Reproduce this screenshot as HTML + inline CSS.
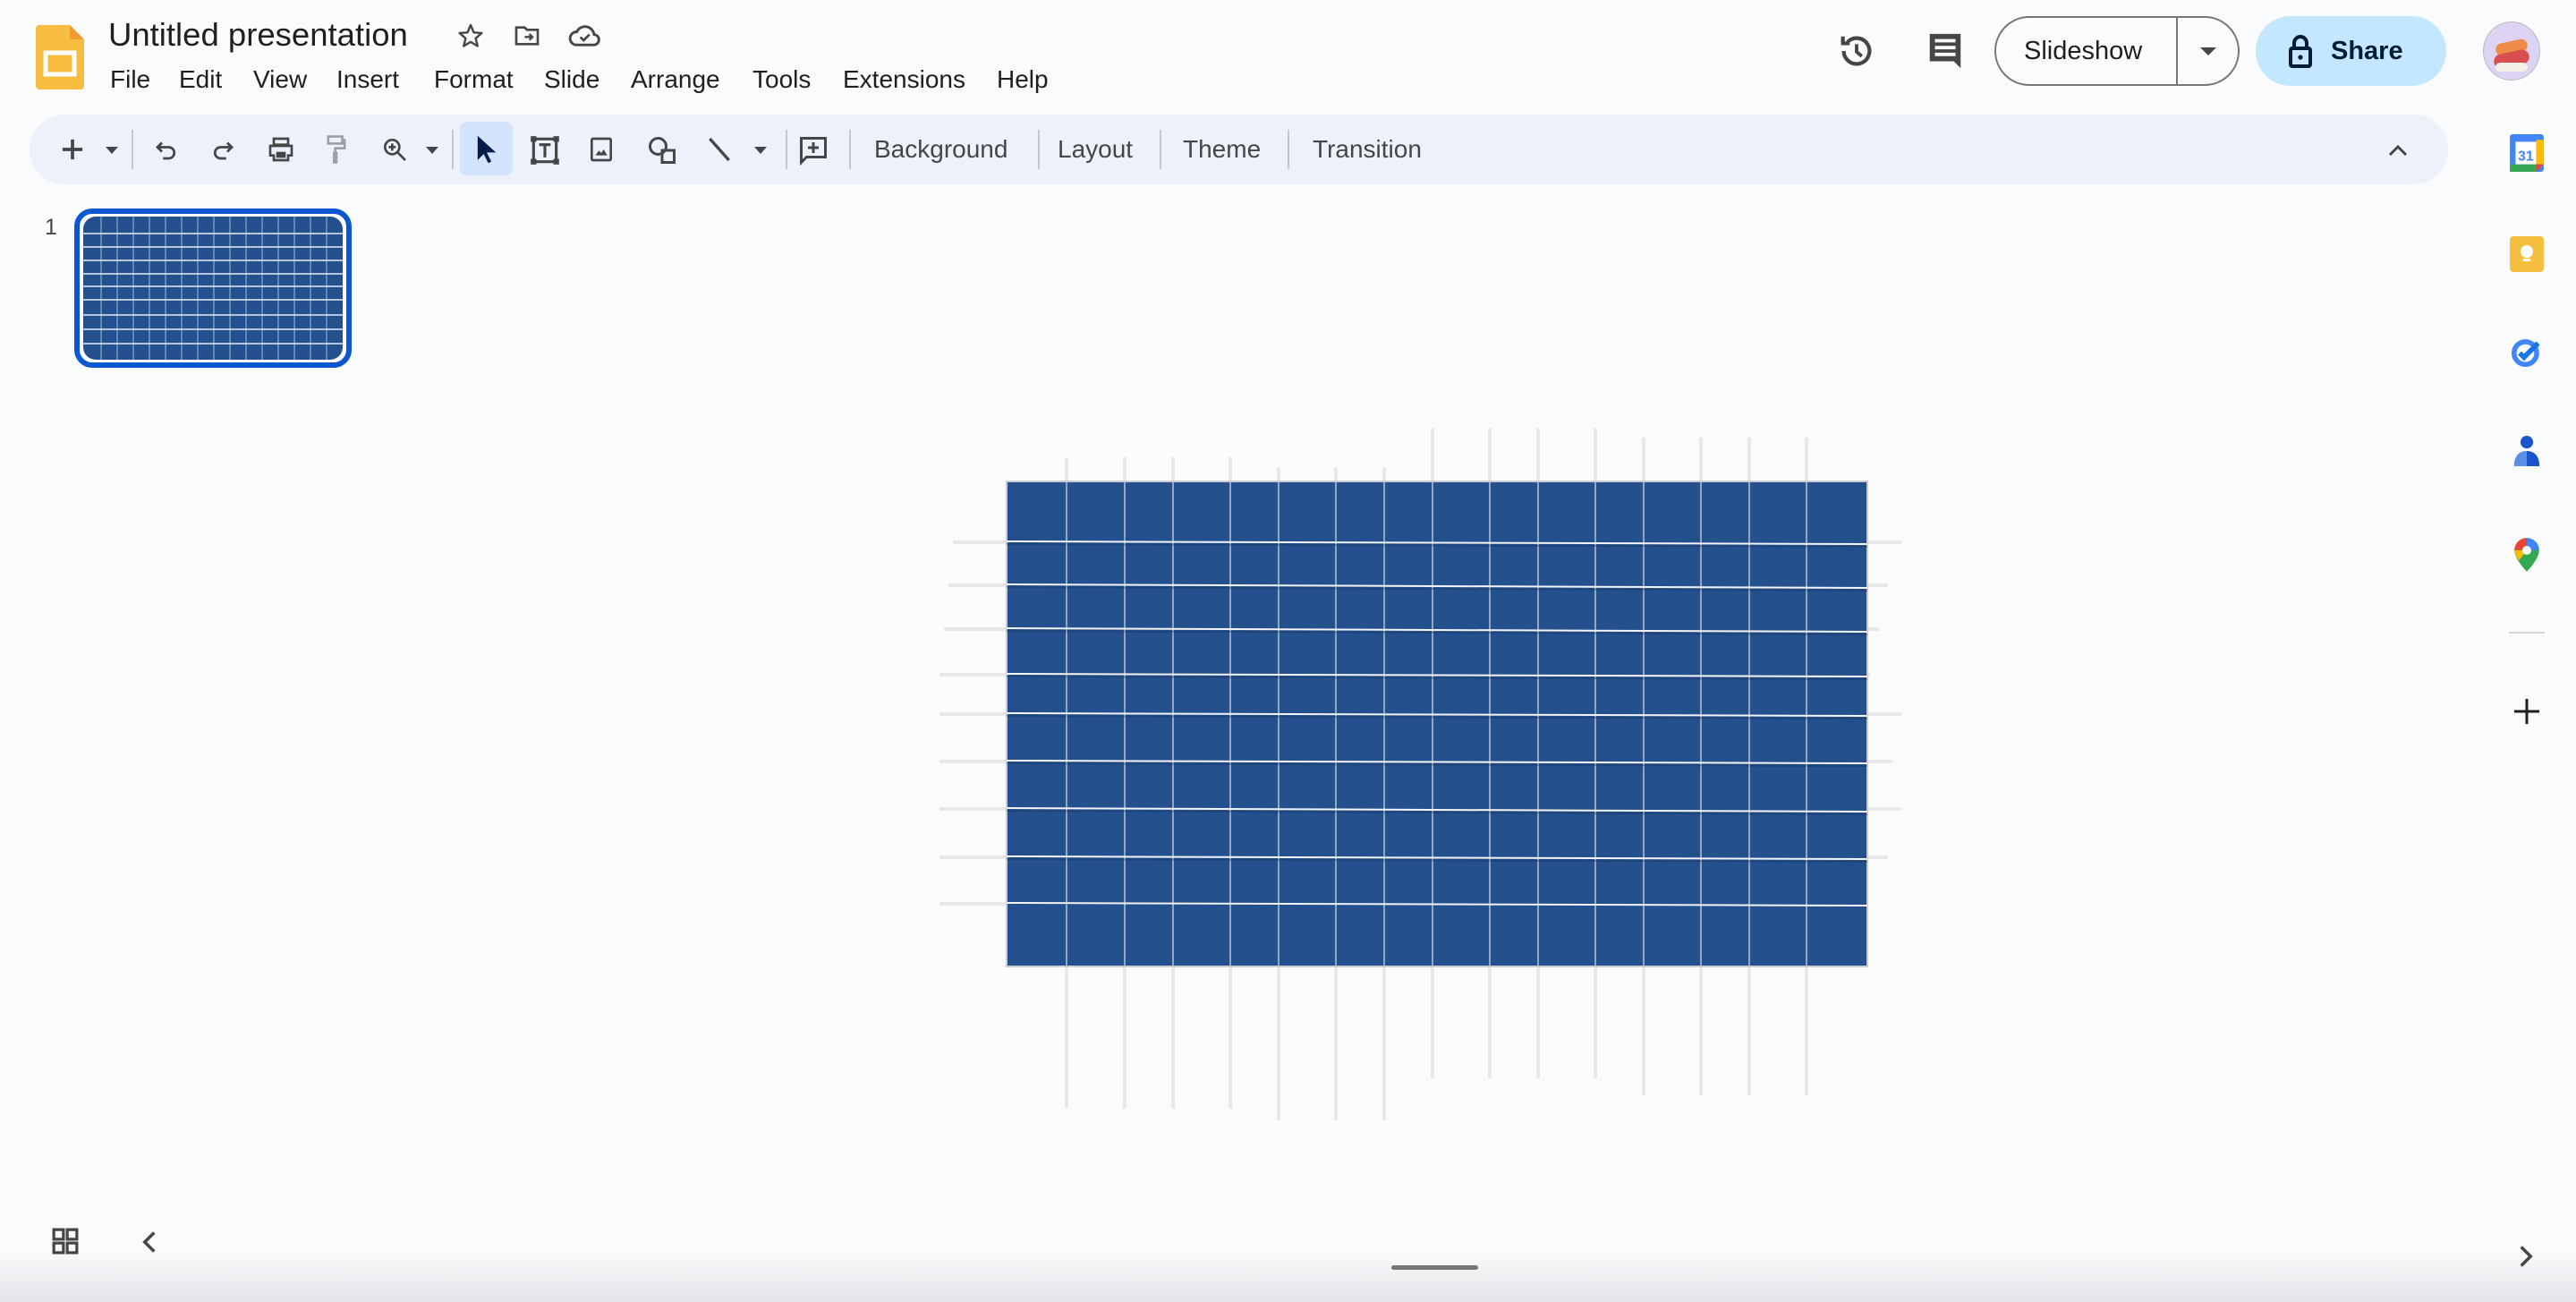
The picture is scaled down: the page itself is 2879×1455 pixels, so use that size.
<!DOCTYPE html>
<html><head><meta charset="utf-8"><style>
*{margin:0;padding:0;box-sizing:border-box}
body{width:2879px;height:1455px;background:#f9fbfd;font-family:"Liberation Sans",sans-serif;color:#1f1f1f;position:relative;overflow:hidden}
.a{position:absolute}
.menu span{position:absolute;top:73px;font-size:28px;color:#1f1f1f}
.tb{position:absolute;left:33px;top:128px;width:2703px;height:78px;background:#edf2fa;border-radius:39px}
.tt{position:absolute;top:151px;font-size:28px;color:#444746}
.sep{position:absolute;top:145px;width:2px;height:44px;background:#c7c7c7}
svg{position:absolute}
</style></head><body>
<svg style="left:40px;top:28px" width="54" height="72" viewBox="0 0 54 72"><path d="M4 0H38L54 16V68a4 4 0 0 1-4 4H4a4 4 0 0 1-4-4V4a4 4 0 0 1 4-4z" fill="#f6bd41"/><path d="M38 0L54 16H38z" fill="#f29a34"/><rect x="11" y="31" width="32" height="24" fill="none" stroke="#fff" stroke-width="5"/></svg>
<div class="a" style="left:121px;top:18px;font-size:36.5px;color:#1f1f1f">Untitled presentation</div>
<svg style="left:510px;top:24px" width="32" height="32" viewBox="0 0 24 24"><path d="M12 3l2.6 6.2 6.7.5-5.1 4.4 1.6 6.5L12 17.1 6.2 20.6l1.6-6.5L2.7 9.7l6.7-.5z" fill="none" stroke="#444746" stroke-width="1.8" stroke-linejoin="round"/></svg>
<svg style="left:573px;top:24px" width="32" height="32" viewBox="0 0 24 24"><path d="M3 5h7l2 2h9v12H3z" fill="none" stroke="#444746" stroke-width="2"/><path d="M10 13h6m-2-2.5L16.5 13 14 15.5" fill="none" stroke="#444746" stroke-width="1.8"/></svg>
<svg style="left:634px;top:24px" width="38" height="32" viewBox="0 0 26 22"><path d="M7 18h13a4 4 0 0 0 .5-8A7 7 0 0 0 7.2 8 5 5 0 0 0 7 18z" fill="none" stroke="#444746" stroke-width="2"/><path d="M10 12l2.5 2.5L17 10" fill="none" stroke="#444746" stroke-width="1.8"/></svg>
<div class="menu"><span style="left:123px">File</span><span style="left:200px">Edit</span><span style="left:283px">View</span><span style="left:376px">Insert</span><span style="left:485px">Format</span><span style="left:608px">Slide</span><span style="left:705px">Arrange</span><span style="left:841px">Tools</span><span style="left:942px">Extensions</span><span style="left:1114px">Help</span></div>
<svg style="left:2052px;top:34px" width="46" height="46" viewBox="0 0 24 24"><path d="M4.5 12a7.5 7.5 0 1 0 2.2-5.3M4 3.5V7.5h4" fill="none" stroke="#444746" stroke-width="2.2"/><path d="M12 8v4.5l3 2.5" fill="none" stroke="#444746" stroke-width="2"/></svg>
<svg style="left:2152px;top:34px" width="44" height="46" viewBox="0 0 22 24"><path d="M2 2h18v16H2z" fill="#444746"/><path d="M16 18h4v4z" fill="#444746"/><path d="M5 6h12M5 10h12M5 14h12" stroke="#f9fbfd" stroke-width="2"/></svg>
<div class="a" style="left:2229px;top:18px;width:274px;height:78px;border:2px solid #747775;border-radius:39px"></div>
<div class="a" style="left:2432px;top:19px;width:2px;height:76px;background:#747775"></div>
<div class="a" style="left:2262px;top:41px;font-size:29px;color:#1f1f1f">Slideshow</div>
<div class="a" style="left:2459px;top:53px;border-left:9px solid transparent;border-right:9px solid transparent;border-top:9px solid #444746"></div>
<div class="a" style="left:2521px;top:18px;width:213px;height:78px;background:#c2e7ff;border-radius:39px"></div>
<svg style="left:2558px;top:38px" width="26" height="38" viewBox="0 0 13 19"><rect x="1" y="8" width="11" height="10" rx="1" fill="none" stroke="#001d35" stroke-width="2"/><path d="M3 8V5a3.5 3.5 0 0 1 7 0v3" fill="none" stroke="#001d35" stroke-width="2"/><circle cx="6.5" cy="13" r="1.3" fill="#001d35"/></svg>
<div class="a" style="left:2605px;top:41px;font-size:29px;font-weight:bold;color:#001d35">Share</div>
<div class="a" style="left:2775px;top:24px;width:64px;height:66px;border-radius:50%;background:#ddd3f3;border:1px solid #bbb"></div>
<div class="a" style="left:2789px;top:46px;width:36px;height:14px;border-radius:7px;background:#f08c4a;transform:rotate(-12deg)"></div>
<div class="a" style="left:2787px;top:58px;width:40px;height:16px;border-radius:8px;background:#d94f4f;transform:rotate(-12deg)"></div>
<div class="a" style="left:2789px;top:70px;width:36px;height:10px;border-radius:5px;background:#f3f0ea"></div>
<div class="tb"></div>
<svg style="left:68px;top:154px" width="26" height="26" viewBox="0 0 14 14"><path d="M7 1v12M1 7h12" stroke="#444746" stroke-width="2"/></svg>
<div class="a" style="left:118px;top:164px;border-left:7px solid transparent;border-right:7px solid transparent;border-top:8px solid #444746"></div>
<div class="sep" style="left:147px"></div>
<svg style="left:171px;top:152px" width="30" height="30" viewBox="0 0 24 24"><path d="M8 6L4 10l4 4M4 10h10a5 5 0 0 1 0 10H9" fill="none" stroke="#444746" stroke-width="2.2"/></svg>
<svg style="left:234px;top:152px" width="30" height="30" viewBox="0 0 24 24"><path d="M16 6l4 4-4 4M20 10H10a5 5 0 0 0 0 10h5" fill="none" stroke="#444746" stroke-width="2.2"/></svg>
<svg style="left:298px;top:151px" width="32" height="32" viewBox="0 0 24 24"><path d="M6 3h12v5H6zM3 9h18v8h-3v4H6v-4H3z" fill="none" stroke="#444746" stroke-width="2"/><path d="M8 14h8v5H8z" fill="#444746"/></svg>
<svg style="left:362px;top:150px" width="28" height="34" viewBox="0 0 20 26"><path d="M3 2h12v6H3zM15 5h2v7H9v4M8 16h2v8H8z" fill="none" stroke="#9aa0a6" stroke-width="2"/></svg>
<svg style="left:425px;top:151px" width="32" height="32" viewBox="0 0 24 24"><circle cx="10" cy="10" r="6" fill="none" stroke="#444746" stroke-width="2"/><path d="M14.5 14.5L21 21M10 7v6M7 10h6" stroke="#444746" stroke-width="2"/></svg>
<div class="a" style="left:476px;top:164px;border-left:7px solid transparent;border-right:7px solid transparent;border-top:8px solid #444746"></div>
<div class="sep" style="left:505px"></div>
<div class="a" style="left:514px;top:136px;width:59px;height:60px;background:#d3e3fd;border-radius:8px"></div>
<svg style="left:530px;top:150px" width="28" height="34" viewBox="0 0 16 20"><path d="M2 1v16l4-4 3 6 2-1-3-6h6z" fill="#041e49"/></svg>
<svg style="left:590px;top:148px" width="38" height="40" viewBox="0 0 24 24"><path d="M4 3v18M20 3v18M3 4h18M3 20h18" stroke="#444746" stroke-width="2"/><rect x="2" y="2" width="4" height="4" fill="#444746"/><rect x="18" y="2" width="4" height="4" fill="#444746"/><rect x="2" y="18" width="4" height="4" fill="#444746"/><rect x="18" y="18" width="4" height="4" fill="#444746"/><path d="M8 8h8M12 8v9" stroke="#444746" stroke-width="2"/></svg>
<svg style="left:656px;top:151px" width="32" height="32" viewBox="0 0 24 24"><rect x="4" y="3" width="16" height="18" rx="1" fill="none" stroke="#444746" stroke-width="2"/><path d="M7 17l3-4 2 2 2-3 3 5z" fill="#444746"/></svg>
<svg style="left:722px;top:150px" width="36" height="36" viewBox="0 0 24 24"><circle cx="9" cy="9" r="6" fill="none" stroke="#444746" stroke-width="2"/><path d="M12 12h9v9h-9z" fill="none" stroke="#444746" stroke-width="2"/></svg>
<svg style="left:788px;top:150px" width="32" height="34" viewBox="0 0 24 24"><path d="M4 3l16 18" stroke="#444746" stroke-width="2.5"/></svg>
<div class="a" style="left:843px;top:164px;border-left:7px solid transparent;border-right:7px solid transparent;border-top:8px solid #444746"></div>
<div class="sep" style="left:878px"></div>
<svg style="left:891px;top:149px" width="36" height="38" viewBox="0 0 24 24"><path d="M3 3h18v14H7l-4 4z" fill="none" stroke="#444746" stroke-width="2"/><path d="M12 6v8M8 10h8" stroke="#444746" stroke-width="2"/></svg>
<div class="sep" style="left:949px"></div>
<div class="tt" style="left:977px">Background</div>
<div class="sep" style="left:1160px"></div>
<div class="tt" style="left:1182px">Layout</div>
<div class="sep" style="left:1296px"></div>
<div class="tt" style="left:1322px">Theme</div>
<div class="sep" style="left:1439px"></div>
<div class="tt" style="left:1467px">Transition</div>
<svg style="left:2668px;top:158px" width="24" height="18" viewBox="0 0 16 12"><path d="M2 10l6-6 6 6" fill="none" stroke="#444746" stroke-width="2"/></svg>
<svg style="left:2805px;top:150px" width="38" height="42" viewBox="0 0 36 40"><rect x="0" y="0" width="36" height="40" rx="3" fill="#4285f4"/><rect x="0" y="32" width="28" height="8" fill="#34a853"/><rect x="28" y="6" width="8" height="26" fill="#fbbc04"/><path d="M28 32h8l-8 8z" fill="#ea4335"/><rect x="6" y="8" width="22" height="24" fill="#fff"/><text x="17" y="28" font-size="15" font-weight="bold" fill="#4285f4" text-anchor="middle" font-family="Liberation Sans">31</text></svg>
<svg style="left:2805px;top:264px" width="38" height="40" viewBox="0 0 38 40"><rect width="38" height="40" rx="4" fill="#f4bf3f"/><circle cx="19" cy="17" r="7" fill="#fff"/><rect x="15" y="25" width="8" height="3" fill="#fff"/></svg>
<svg style="left:2805px;top:374px" width="38" height="38" viewBox="0 0 24 24"><circle cx="11" cy="13" r="8" fill="none" stroke="#4285f4" stroke-width="3.5"/><path d="M7 13l3 3 10-10" fill="none" stroke="#1a73e8" stroke-width="3.5"/></svg>
<svg style="left:2807px;top:484px" width="34" height="40" viewBox="0 0 24 28"><circle cx="12" cy="7" r="5" fill="#1a56c9"/><path d="M2 26c0-8 4-12 10-12s10 4 10 12z" fill="#1a56c9"/><path d="M2 26c0-8 4-12 10-12v12z" fill="#8ab4f8" opacity=".6"/></svg>
<svg style="left:2809px;top:600px" width="30" height="40" viewBox="0 0 24 32"><path d="M12 1a11 11 0 0 0-11 11c0 8 11 19 11 19s11-11 11-19A11 11 0 0 0 12 1z" fill="#34a853"/><path d="M1 12A11 11 0 0 1 12 1v10z" fill="#ea4335"/><path d="M12 1a11 11 0 0 1 11 11H12z" fill="#4285f4"/><path d="M1 12c0 3 2 6 4 9l7-9z" fill="#fbbc04"/><circle cx="12" cy="12" r="4" fill="#fff"/></svg>
<div class="a" style="left:2804px;top:706px;width:40px;height:2px;background:#d6d6d6"></div>
<svg style="left:2810px;top:781px" width="28" height="28" viewBox="0 0 14 14"><path d="M7 0v14M0 7h14" stroke="#1f1f1f" stroke-width="1.5"/></svg>
<div class="a" style="left:50px;top:240px;font-size:25px;color:#444746">1</div>
<div class="a" style="left:83px;top:233px;width:310px;height:178px;border:6px solid #0b57d0;border-radius:20px;background:#fff"></div>
<svg style="left:93px;top:242px" width="290" height="160" viewBox="0 0 290 160"><defs><clipPath id="c"><rect width="290" height="160" rx="14"/></clipPath></defs><g clip-path="url(#c)"><rect width="290" height="160" fill="#24508d"/><g stroke="#a9bad3" stroke-width="1"><path d="M20 0v160M38 0v160M56 0v160M74 0v160M92 0v160M110 0v160M128 0v160M146 0v160M164 0v160M182 0v160M200 0v160M218 0v160M236 0v160M254 0v160M272 0v160"/></g><g stroke="#e5ecf4" stroke-width="1.5"><path d="M0 19h290M0 34h290M0 49h290M0 64h290M0 78h290M0 93h290M0 110h290M0 126h290M0 142h290"/></g></g></svg>
<svg style="left:1050px;top:460px" width="1150" height="820" viewBox="0 0 1150 820">
<g stroke="#e6e8ea" stroke-width="4" fill="none">
<path d="M142 51v727M207 51v727M261 51v727M325 51v727M379 62v730M443 62v730M497 62v730M551 18v727M615 18v727M669 18v727M733 18v727M787 29v735M851 29v735M905 29v735M969 29v735"/>
<path d="M15 146h1060M10 194h1050M5 243h1045M0 294h1040M-5 338h1080M-5 391h1070M-5 444h1080M-5 498h1065M-5 550h1020"/>
</g>
<rect x="75" y="78" width="962" height="542" fill="#24508d" stroke="#c8ccd2" stroke-width="2"/>
<g stroke="#b7c3d4" stroke-width="1.5"><path d="M142 78v542M207 78v542M261 78v542M325 78v542M379 78v542M443 78v542M497 78v542M551 78v542M615 78v542M669 78v542M733 78v542M787 78v542M851 78v542M905 78v542M969 78v542"/></g>
<g stroke="#f2f4f7" stroke-width="2" fill="none"><path d="M75 145L1037 148M75 193L1037 197M75 242L1037 246M75 293L1037 296M75 337L1037 340M75 390L1037 393M75 443L1037 447M75 497L1037 500M75 549L1037 552"/></g>
<g stroke="#16315a" stroke-width="2" opacity=".35" fill="none"><path d="M75 148L1037 151M75 196L1037 200M75 245L1037 249M75 296L1037 299M75 340L1037 343M75 393L1037 396M75 446L1037 450M75 500L1037 503"/></g>
</svg>
<div class="a" style="left:0;top:1395px;width:2879px;height:60px;background:linear-gradient(#f9fbfd,#e3e5e8)"></div>
<svg style="left:58px;top:1372px" width="30" height="30" viewBox="0 0 14 14"><path d="M1 1h5v5H1zM8 1h5v5H8zM1 8h5v5H1zM8 8h5v5H8z" fill="none" stroke="#444746" stroke-width="1.5"/></svg>
<svg style="left:158px;top:1374px" width="18" height="28" viewBox="0 0 10 16"><path d="M8 2L2 8l6 6" fill="none" stroke="#444746" stroke-width="2"/></svg>
<div class="a" style="left:1555px;top:1414px;width:97px;height:5px;background:#747775;border-radius:3px"></div>
<svg style="left:2814px;top:1390px" width="18" height="28" viewBox="0 0 10 16"><path d="M2 2l6 6-6 6" fill="none" stroke="#444746" stroke-width="2"/></svg>
</body></html>
